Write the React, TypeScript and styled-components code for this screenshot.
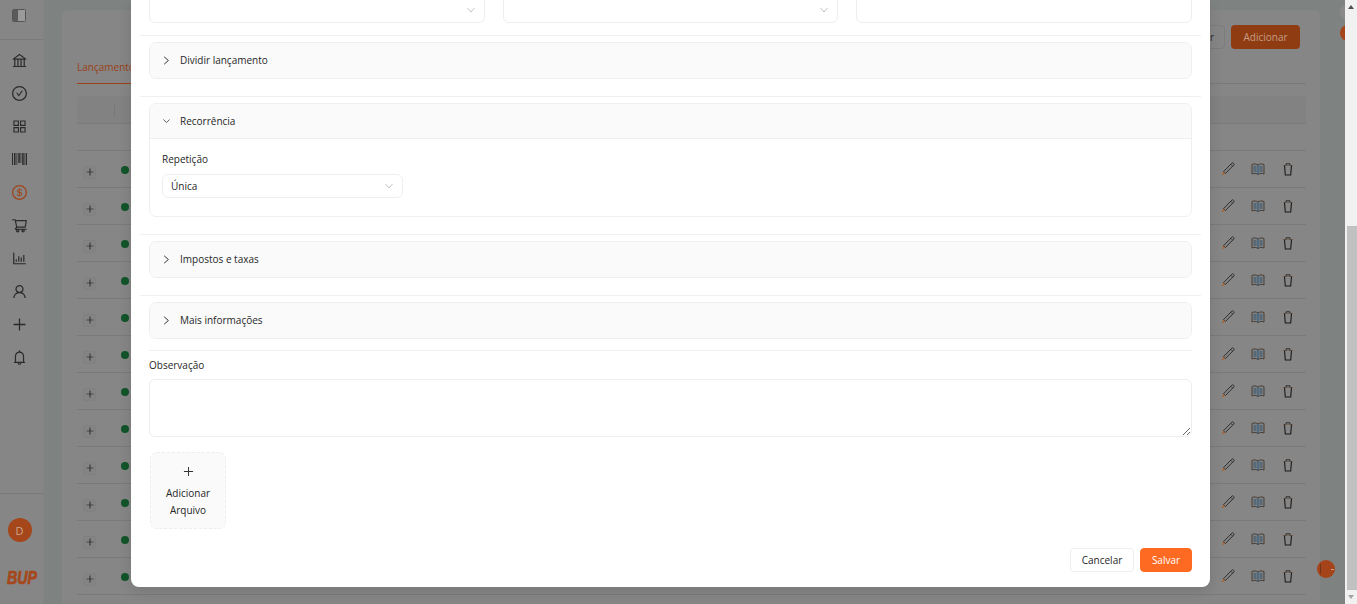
import styled, { createGlobalStyle } from 'styled-components';
import {
  AiOutlineAppstore,
  AiOutlineBank,
  AiOutlineBarChart,
  AiOutlineBell,
  AiOutlineCheckCircle,
  AiOutlineDollarCircle,
  AiOutlinePlus,
  AiOutlineShoppingCart,
  AiOutlineUser,
} from 'react-icons/ai';

const GlobalStyle = createGlobalStyle`
  html, body {
    margin: 0;
    padding: 0;
    overflow: hidden;
  }
  body {
    font-family: "Open Sans", "Noto Sans", sans-serif;
    font-size: 10px;
    color: #262626;
  }
  * {
    box-sizing: border-box;
  }
`;

const Screen = styled.div`
  display: flex;
  width: 1357px;
  height: 604px;
  overflow: hidden;
`;
const Page = styled.div`
  position: relative;
  flex: 1;
  display: flex;
  background: #7e8382;
  overflow: hidden;
`;
const Sidebar = styled.aside`
  width: 44px;
  flex: none;
  display: flex;
  flex-direction: column;
  background: #868686;
  border-right: 1px solid #828484;
`;
const SidebarTop = styled.div`
  height: 40px;
  flex: none;
  display: flex;
  align-items: center;
  justify-content: center;
  padding-right: 5px;
  padding-bottom: 8px;
  border-bottom: 1px solid #7a7a7a;
`;
const NavList = styled.nav`
  flex: 1;
  display: flex;
  flex-direction: column;
  align-items: center;
  gap: 11px;
  padding-top: 9px;
  padding-right: 4px;
`;
const NavItem = styled.div<{ $active?: boolean }>`
  width: 22px;
  height: 22px;
  display: flex;
  align-items: center;
  justify-content: center;
  font-size: 17px;
  color: ${(p) => (p.$active ? '#a0441a' : '#2b2b2b')};
`;
const SidebarBottom = styled.div`
  flex: none;
  height: 111px;
  display: flex;
  flex-direction: column;
  align-items: center;
  padding: 24px 4px 0 0;
  border-top: 1px solid #7a7a7a;
`;
const Avatar = styled.div`
  width: 24px;
  height: 24px;
  border-radius: 50%;
  display: flex;
  align-items: center;
  justify-content: center;
  background: #a5471a;
  color: #cfa690;
  font-size: 11px;
`;
const Logo = styled.div`
  margin: 27px 0 0 6px;
  font-family: "Liberation Sans", sans-serif;
  font-size: 19px;
  line-height: 18px;
  font-weight: 700;
  font-style: italic;
  color: #a5471a;
  -webkit-text-stroke: 0.7px #a5471a;
  transform: scaleX(0.75);
`;
const Main = styled.main`
  flex: 1;
  padding: 10px 25px 0 18px;
  min-width: 0;
`;
const Card = styled.section`
  height: 100%;
  background: #868686;
  border-radius: 6px 6px 0 0;
  padding: 15px 14px 0 15px;
`;
const Toolbar = styled.div`
  display: flex;
  justify-content: flex-end;
  gap: 6px;
  padding-right: 6px;
  height: 24px;
`;
const GhostButton = styled.div`
  width: 80px;
  height: 24px;
  display: flex;
  align-items: center;
  justify-content: flex-end;
  padding-right: 10px;
  border: 1px solid #7c7c7c;
  border-radius: 4px;
  color: #2b2b2b;
`;
const AddButton = styled.div`
  width: 69px;
  height: 24px;
  border-radius: 4px;
  display: flex;
  align-items: center;
  justify-content: center;
  background: #903c12;
  color: #c49c86;
`;
const Tabs = styled.div`
  margin-top: 9px;
  height: 26px;
  border-bottom: 1px solid #7a7a7a;
`;
const Tab = styled.div`
  display: inline-block;
  height: 26px;
  line-height: 19px;
  color: #9a4118;
  border-bottom: 1px solid #9a4118;
`;
const TableHead = styled.div`
  margin-top: 12px;
  height: 28px;
  display: flex;
  align-items: center;
  background: #828282;
  border-bottom: 1px solid #7a7a7a;
  border-radius: 4px 4px 0 0;
  padding-left: 37px;
`;
const HeadDivider = styled.span`
  width: 1px;
  height: 14px;
  background: #787878;
`;
const FilterRow = styled.div`
  height: 27px;
  border-bottom: 1px solid #7a7a7a;
`;
const Row = styled.div`
  height: 37px;
  display: flex;
  align-items: center;
  border-bottom: 1px solid #7a7a7a;
  padding: 4px 11px 0 6px;
`;
const ExpandButton = styled.div`
  width: 13px;
  height: 13px;
  margin-top: 2px;
  display: flex;
  align-items: center;
  justify-content: center;
  border: 1px solid #808080;
  border-radius: 3px;
  background: #848484;
  color: #111;
  font-size: 10px;
`;
const Dot = styled.span`
  width: 8px;
  height: 8px;
  margin: -2px 0 0 25px;
  border-radius: 50%;
  background: #12542a;
`;
const Actions = styled.div`
  margin: -4px 0 0 auto;
  display: flex;
  gap: 16px;
`;
const ChatBubble = styled.div`
  position: absolute;
  left: 1317px;
  top: 560px;
  width: 18px;
  height: 18px;
  border-radius: 50%;
  background: #a5431a;
  &::before {
    content: '';
    position: absolute;
    left: 3px;
    top: 3px;
    width: 1px;
    height: 12px;
    border-radius: 50%;
    background: #6e3418;
  }
  &::after {
    content: '';
    position: absolute;
    right: 1px;
    top: 9px;
    width: 3px;
    height: 1px;
    background: #c9a08a;
  }
`;
const EdgeButton = styled.div<{ $grey?: boolean }>`
  position: absolute;
  left: 1340px;
  top: ${(p) => (p.$grey ? '4px' : '25px')};
  width: 16px;
  height: 16px;
  border-radius: 50%;
  background: ${(p) => (p.$grey ? '#8a8a8a' : '#a5431a')};
`;
const Mask = styled.div`
  position: absolute;
  inset: 0;
  display: flex;
  padding: 0 0 17px 131px;
`;
const Modal = styled.div`
  width: 1079px;
  display: flex;
  flex-direction: column;
  justify-content: flex-end;
  overflow: hidden;
  padding: 0 18px 15px;
  background: #fff;
  border-radius: 0 0 8px 8px;
  box-shadow: 0 4px 14px rgba(0, 0, 0, 0.12);
`;
const FieldRow = styled.div`
  flex: none;
  display: grid;
  grid-template-columns: 336px 335px 336px;
  gap: 18px;
  margin-bottom: 12px;
`;
const Select = styled.div<{ $width?: number }>`
  height: ${(p) => (p.$width ? '24px' : '32px')};
  width: ${(p) => (p.$width ? `${p.$width}px` : 'auto')};
  display: flex;
  align-items: ${(p) => (p.$width ? 'center' : 'flex-end')};
  justify-content: space-between;
  padding: ${(p) => (p.$width ? '0 9px 0 8px' : '0 9px 9px 9px')};
  border: 1px solid #eeeeee;
  border-radius: 6px;
  background: #fff;
`;
const Divider = styled.div<{ $inset?: boolean }>`
  flex: none;
  height: 1px;
  background: #f0f0f0;
  margin: ${(p) => (p.$inset ? '0' : '0 -9px')};
  margin-bottom: 6px;
`;
const Collapse = styled.div<{ $tight?: boolean }>`
  flex: none;
  border: 1px solid #efefef;
  border-radius: 7px;
  margin-bottom: ${(p) => (p.$tight ? '11px' : '17px')};
  overflow: hidden;
`;
const CollapseHeader = styled.div<{ $open?: boolean }>`
  height: 35px;
  display: flex;
  align-items: center;
  gap: 10px;
  padding: 0 0 1px 13px;
  background: #fafafa;
  border-bottom: ${(p) => (p.$open ? '1px solid #efefef' : 'none')};
`;
const ChevronBox = styled.span`
  width: 7px;
  display: flex;
  justify-content: center;
`;
const CollapseBody = styled.div`
  padding: 12px 12px 18px;
  display: flex;
  flex-direction: column;
`;
const Label = styled.label`
  display: block;
  height: 16px;
  line-height: 16px;
`;
const FieldLabel = styled(Label)`
  margin-bottom: 7px;
`;
const NotesLabel = styled(Label)`
  flex: none;
  margin: 0 0 6px;
`;
const Notes = styled.textarea`
  flex: none;
  display: block;
  width: 100%;
  height: 58px;
  border: 1px solid #eeeeee;
  border-radius: 6px;
  outline: none;
  font: inherit;
`;
const Upload = styled.div`
  flex: none;
  width: 76px;
  height: 77px;
  margin: 15px 0 0 1px;
  display: flex;
  flex-direction: column;
  align-items: center;
  padding-top: 12px;
  border: 1px dashed #eeeeee;
  border-radius: 7px;
  background: #fafafa;
  text-align: center;
  line-height: 17px;
`;
const UploadPlus = styled.span`
  height: 15px;
  font-size: 13px;
  margin-bottom: 5px;
  color: #333;
`;
const Footer = styled.div`
  flex: none;
  display: flex;
  justify-content: flex-end;
  gap: 6px;
  margin-top: 19px;
`;
const FooterButton = styled.button<{ $primary?: boolean }>`
  height: 24px;
  width: ${(p) => (p.$primary ? '52px' : '64px')};
  padding: 0;
  border: 1px solid ${(p) => (p.$primary ? '#ff6a22' : '#eeeeee')};
  border-radius: 4px;
  background: ${(p) => (p.$primary ? '#ff6a22' : '#fff')};
  color: ${(p) => (p.$primary ? '#fff' : '#262626')};
  font: inherit;
`;
const ScrollTrack = styled.div`
  width: 12px;
  flex: none;
  display: flex;
  flex-direction: column;
  background: #f1f1f1;
`;
const ScrollArrow = styled.div<{ $down?: boolean }>`
  height: 14px;
  flex: none;
  display: flex;
  align-items: center;
  justify-content: center;
  &::before {
    content: '';
    border-left: 3.5px solid transparent;
    border-right: 3.5px solid transparent;
    ${(p) => (p.$down ? 'border-top: 4px solid #a3a3a3;' : 'border-bottom: 4px solid #505050;')}
  }
`;
const ScrollSpace = styled.div`
  flex: 1;
  padding-top: 212px;
  padding-left: 2px;
`;
const ScrollThumb = styled.div`
  height: 100%;
  background: #c1c1c1;
`;

const RightChevron = () => (
  <svg width="7" height="9" viewBox="0 0 7 9" fill="none">
    <path d="M1.200 .8 5.400 4.500 1.200 8.200" stroke="#333" strokeWidth="1" />
  </svg>
);

const DownChevron = ({ width = 8, color = '#c4c4c4' }: { width?: number; color?: string }) => (
  <svg width={width} height="6" viewBox={`0 0 ${width} 6`} fill="none">
    <path d={`M.5 1 ${width / 2} 5 ${width - 0.5} 1`} stroke={color} strokeWidth="1" />
  </svg>
);

const PanelIcon = () => (
  <svg width="14" height="13" viewBox="0 0 14 13">
    <rect x=".5" y=".5" width="13" height="12" rx="1" fill="#9a9a9a" stroke="#555" />
    <rect x="1" y="1" width="5" height="11" fill="#5a5a5a" />
  </svg>
);

const BarcodeIcon = () => (
  <svg width="15" height="12" viewBox="0 0 15 12">
    <path
      d="M0 0h1v12H0zM2 0h1.500v12H2zM4.500 0h.8v12h-.8zM6.300 0h1.500v10H6.300zM8.500 0h.8v10h-.8zM10.200 0h1.500v12h-1.500zM12.500 0h.8v12h-.8zM14 0h1v12h-1z"
      fill="#2b2b2b"
    />
  </svg>
);

const PencilIcon = () => (
  <svg width="14" height="14" viewBox="0 0 14 14" fill="none">
    <path d="M2.500 9.700 10.800 1.200a1.100 1.100 0 0 1 1.600 0l.3.300a1.100 1.100 0 0 1 0 1.600L4.400 11.500z" stroke="#242424" strokeWidth=".9" />
    <path d="M9.800 2.300 11.700 4.200" stroke="#242424" strokeWidth=".8" />
    <path d="M2.500 9.700 4.400 11.500 .6 13.400z" fill="#a8622f" />
  </svg>
);

const BookIcon = () => (
  <svg width="14" height="14" viewBox="0 0 14 14" fill="none">
    <path d="M1 2.500c2-.8 4.500-.8 6 .5 1.500-1.300 4-1.300 6-.5V12c-2-.8-4.500-.8-6 .5-1.500-1.300-4-1.300-6-.5z" fill="#7c8286" stroke="#4a3c30" />
    <path d="M7 3v9.500" stroke="#2a5578" />
    <path d="M2.500 5h3M2.500 7h3M2.500 9h3M8.500 5h3M8.500 7h3M8.500 9h3" stroke="#2e4a60" strokeWidth=".9" />
  </svg>
);

const TrashIcon = () => (
  <svg width="14" height="14" viewBox="0 0 14 14" fill="none">
    <path d="M2 3.500h10" stroke="#7a6a5c" />
    <path d="M5 3.500V1.800h4v1.700" stroke="#2a2a2a" />
    <path d="M3.500 3.500 4.300 13h5.400l.8-9.500" stroke="#1a1a1a" strokeWidth="1.100" />
  </svg>
);

const navItems = [
  { icon: AiOutlineBank },
  { icon: AiOutlineCheckCircle },
  { icon: AiOutlineAppstore },
  { icon: BarcodeIcon },
  { icon: AiOutlineDollarCircle, active: true },
  { icon: AiOutlineShoppingCart },
  { icon: AiOutlineBarChart },
  { icon: AiOutlineUser },
  { icon: AiOutlinePlus },
  { icon: AiOutlineBell },
];

const rows = Array.from({ length: 12 }, (_, i) => i);

function App() {
  return (
    <Screen>
      <GlobalStyle />
      <Page>
        <Sidebar>
          <SidebarTop>
            <PanelIcon />
          </SidebarTop>
          <NavList>
            {navItems.map(({ icon: Icon, active }, index) => (
              <NavItem key={index} $active={active}>
                <Icon />
              </NavItem>
            ))}
          </NavList>
          <SidebarBottom>
            <Avatar>D</Avatar>
            <Logo>BUP</Logo>
          </SidebarBottom>
        </Sidebar>
        <Main>
          <Card>
            <Toolbar>
              <GhostButton>Filtrar</GhostButton>
              <AddButton>Adicionar</AddButton>
            </Toolbar>
            <Tabs>
              <Tab>Lançamentos</Tab>
            </Tabs>
            <TableHead>
              <HeadDivider />
            </TableHead>
            <FilterRow />
            {rows.map((row) => (
              <Row key={row}>
                <ExpandButton>
                  <AiOutlinePlus />
                </ExpandButton>
                <Dot />
                <Actions>
                  <PencilIcon />
                  <BookIcon />
                  <TrashIcon />
                </Actions>
              </Row>
            ))}
          </Card>
        </Main>
        <EdgeButton $grey />
        <EdgeButton />
        <ChatBubble />
        <Mask>
          <Modal>
            <FieldRow>
              <Select>
                <span />
                <DownChevron />
              </Select>
              <Select>
                <span />
                <DownChevron />
              </Select>
              <Select />
            </FieldRow>
            <Divider />
            <Collapse>
              <CollapseHeader>
                <ChevronBox>
                  <RightChevron />
                </ChevronBox>
                Dividir lançamento
              </CollapseHeader>
            </Collapse>
            <Divider />
            <Collapse>
              <CollapseHeader $open>
                <ChevronBox>
                  <DownChevron width={9} color="#333" />
                </ChevronBox>
                Recorrência
              </CollapseHeader>
              <CollapseBody>
                <FieldLabel>Repetição</FieldLabel>
                <Select $width={241}>
                  Única
                  <DownChevron />
                </Select>
              </CollapseBody>
            </Collapse>
            <Divider />
            <Collapse>
              <CollapseHeader>
                <ChevronBox>
                  <RightChevron />
                </ChevronBox>
                Impostos e taxas
              </CollapseHeader>
            </Collapse>
            <Divider />
            <Collapse $tight>
              <CollapseHeader>
                <ChevronBox>
                  <RightChevron />
                </ChevronBox>
                Mais informações
              </CollapseHeader>
            </Collapse>
            <Divider $inset />
            <NotesLabel>Observação</NotesLabel>
            <Notes />
            <Upload>
              <UploadPlus>
                <AiOutlinePlus />
              </UploadPlus>
              Adicionar
              <br />
              Arquivo
            </Upload>
            <Footer>
              <FooterButton>Cancelar</FooterButton>
              <FooterButton $primary>Salvar</FooterButton>
            </Footer>
          </Modal>
        </Mask>
      </Page>
      <ScrollTrack>
        <ScrollArrow />
        <ScrollSpace>
          <ScrollThumb />
        </ScrollSpace>
        <ScrollArrow $down />
      </ScrollTrack>
    </Screen>
  );
}

export default App;
